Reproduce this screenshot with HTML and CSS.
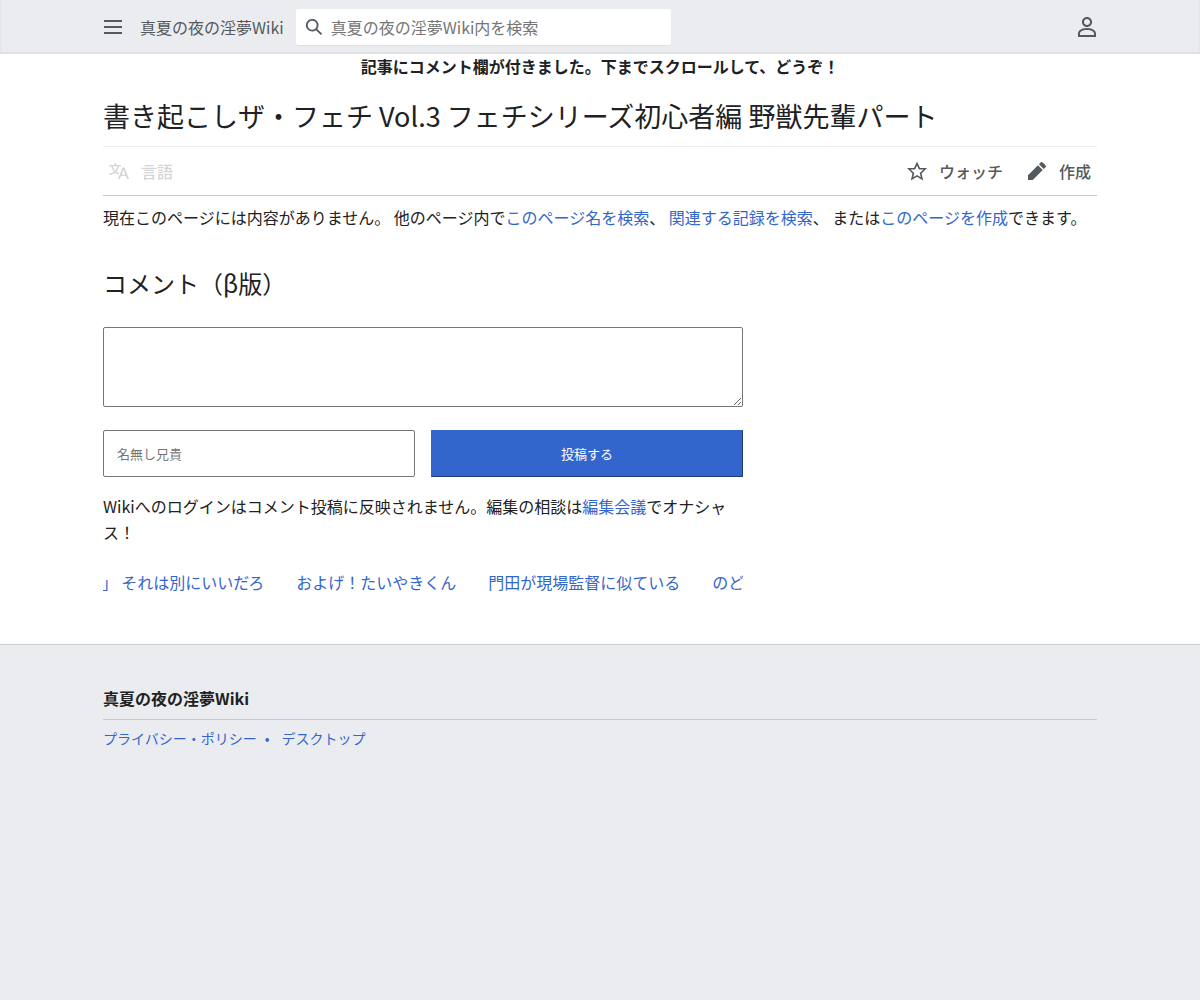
FILE: index.html
```
<!DOCTYPE html>
<html lang="ja">
<head>
<meta charset="UTF-8">
<meta name="viewport" content="width=device-width, initial-scale=1">
<title>書き起こしザ・フェチ Vol.3 フェチシリーズ初心者編 野獣先輩パート</title>
<link rel="stylesheet" href="styles.css">
</head>
<body>

<header class="header-container">
  <div class="header inner">
    <button class="icon-button" type="button" aria-label="メニュー">
      <svg class="icon" viewBox="0 0 20 20"><path d="M1 3h18v2H1zm0 6h18v2H1zm0 6h18v2H1z"/></svg>
    </button>
    <a class="branding" href="#">真夏の夜の淫夢Wiki</a>
    <form class="search-box">
      <svg class="icon search-icon" viewBox="0 0 20 20"><path d="M12.2 13.6a7 7 0 1 1 1.4-1.4l5.4 5.4-1.4 1.4zM13 8A5 5 0 1 0 3 8a5 5 0 0 0 10 0"/></svg>
      <input class="search" type="search" aria-label="検索" placeholder="真夏の夜の淫夢Wiki内を検索">
    </form>
    <button class="icon-button user-menu" type="button" aria-label="利用者メニュー">
      <svg class="icon" viewBox="0 0 20 20"><path d="M10 8c1.7 0 3.06-1.35 3.06-3S11.7 2 10 2 6.94 3.35 6.94 5 8.3 8 10 8m0 2c-2.8 0-5.06-2.24-5.06-5S7.2 0 10 0s5.06 2.24 5.06 5-2.26 5-5.06 5m-7 8h14v-1.33c0-1.75-2.31-3.56-7-3.56s-7 1.81-7 3.56zm7-6.89c6.66 0 9 3.33 9 5.56V20H1v-3.33c0-2.23 2.34-5.56 9-5.56"/></svg>
    </button>
  </div>
</header>

<main class="inner">
  <div class="site-notice">記事にコメント欄が付きました。下までスクロールして、どうぞ！</div>

  <h1>書き起こしザ・フェチ Vol.3 フェチシリーズ初心者編 野獣先輩パート</h1>

  <nav class="page-actions">
    <button class="action language" type="button" disabled>
      <svg class="icon" viewBox="0 0 20 20"><path d="M20 18h-1.44a.6.6 0 0 1-.4-.12.8.8 0 0 1-.23-.31L17 15h-5l-1 2.54a.8.8 0 0 1-.22.3.6.6 0 0 1-.4.14H9l4.55-11.47h1.89zm-3.53-4.31L14.89 9.5a12 12 0 0 1-.39-1.24q-.09.37-.19.69l-.19.56-1.58 4.19zm-6.3-1.58a13.4 13.4 0 0 1-2.91-1.41 11.46 11.46 0 0 0 2.81-5.37H12V4H7.31a4 4 0 0 0-.2-.56C6.87 2.79 6.6 2 6.6 2l-1.47.5s.4.89.6 1.5H0v1.33h2.15A11.23 11.23 0 0 0 5 10.7a17.2 17.2 0 0 1-5 2.1q.56.82.87 1.38a23.3 23.3 0 0 0 5.22-2.51 15.6 15.6 0 0 0 3.56 1.77zM3.63 5.33h4.91a8.1 8.1 0 0 1-2.45 4.45 9.1 9.1 0 0 1-2.46-4.45"/></svg>
      <span>言語</span>
    </button>
    <a class="action watch" href="#">
      <svg class="icon" viewBox="0 0 20 20"><path d="M20 7h-7L10 .5 7 7H0l5.46 5.47-1.64 7 6.18-3.7 6.18 3.73-1.63-7zm-10 6.9-3.76 2.27 1-4.28L3.5 8.5h4.61L10 4.6l1.9 3.9h4.6l-3.73 3.4 1 4.28z"/></svg>
      <span>ウォッチ</span>
    </a>
    <a class="action" href="#">
      <svg class="icon" viewBox="0 0 20 20"><path d="m16.77 8 1.94-2a1 1 0 0 0 0-1.41l-3.34-3.3a1 1 0 0 0-1.41 0L12 3.23zM1 14.25V19h4.75l9.96-9.96-4.75-4.75z"/></svg>
      <span>作成</span>
    </a>
  </nav>

  <p class="no-article">現在このページには内容がありません。 他のページ内で<a href="#">このページ名を検索</a>、 <a href="#">関連する記録を検索</a>、 または<a href="#">このページを作成</a>できます。</p>

  <section class="comments">
    <h2>コメント（β版）</h2>
    <form class="comment-form">
      <textarea class="comment-text" aria-label="コメント"></textarea>
      <div class="comment-row">
        <input class="comment-name" type="text" aria-label="名前" placeholder="名無し兄貴">
        <button class="comment-submit" type="button">投稿する</button>
      </div>
    </form>
    <p class="comment-note">Wikiへのログインはコメント投稿に反映されません。編集の相談は<a href="#">編集会議</a>でオナシャス！</p>
    <div class="ticker">
      <a href="#">」 それは別にいいだろ</a>
      <a href="#">およげ！たいやきくん</a>
      <a href="#">門田が現場監督に似ている</a>
      <a href="#">のど</a>
    </div>
  </section>
</main>

<footer class="footer">
  <div class="inner">
    <h2 class="footer-title">真夏の夜の淫夢Wiki</h2>
    <ul class="footer-places">
      <li><a href="#">プライバシー・ポリシー</a></li>
      <li><a href="#">デスクトップ</a></li>
    </ul>
  </div>
</footer>

</body>
</html>
```
FILE: styles.css
```
* {
  box-sizing: border-box;
}

body {
  margin: 0;
  min-height: 100vh;
  display: flex;
  flex-direction: column;
  background: #fff;
  color: #202122;
  font-family: "Noto Sans CJK JP", sans-serif;
  font-size: 16px;
  line-height: 26px;
}

a {
  color: #36c;
  text-decoration: none;
}

a:hover {
  text-decoration: underline;
}

button,
input,
textarea {
  font-family: inherit;
}

.inner {
  width: 100%;
  max-width: 994px;
  margin: 0 auto;
}

.icon {
  display: block;
  flex: none;
  width: 20px;
  height: 20px;
  fill: currentColor;
}

/* header */
.header-container {
  background: #eaecf0;
  box-shadow: inset 0 -1px 3px rgba(0, 0, 0, 0.08);
}

.header {
  display: flex;
  align-items: center;
  height: 54px;
}

.icon-button {
  padding: 0;
  border: 0;
  background: none;
  color: #54595d;
  cursor: pointer;
}

.branding {
  margin: 0 12px 0 17px;
  color: #54595d;
}

.search-box {
  display: flex;
  align-items: center;
  flex: 0 1 375px;
  height: 36px;
  padding-left: 9px;
  background: #fff;
  border-radius: 2px;
  box-shadow: 0 1px 1px rgba(0, 0, 0, 0.05);
}

.search-icon {
  width: 18px;
  height: 18px;
  color: #54595d;
}

.search {
  flex: 1;
  min-width: 0;
  padding: 0 8px;
  border: 0;
  outline: 0;
  background: none;
  font-size: 16px;
}

.search::placeholder,
.comment-name::placeholder {
  color: #757575;
}

.user-menu {
  margin-left: auto;
}

/* article */
.site-notice {
  text-align: center;
  font-weight: bold;
  line-height: 24px;
}

h1 {
  margin: 20px 0 12px;
  font-size: 27px;
  font-weight: normal;
  line-height: 36px;
}

.page-actions {
  display: flex;
  align-items: center;
  height: 50px;
  padding: 0 6px;
  border-top: 1px solid #eaecf0;
  border-bottom: 1px solid #c8ccd1;
}

.action {
  display: flex;
  align-items: center;
  gap: 12px;
  color: #54595d;
  font-size: 16px;
  font-weight: 500;
}

.language {
  margin-right: auto;
  padding: 0;
  border: 0;
  background: none;
  opacity: 0.25;
}

.watch {
  margin-right: 24px;
}

.no-article {
  margin: 8px 0 0;
}

/* comments */
.comments {
  max-width: 640px;
  padding-bottom: 49px;
}

.comments h2 {
  margin: 36px 0 27px;
  font-size: 24px;
  font-weight: normal;
  line-height: 34px;
}

.comment-text {
  display: block;
  width: 100%;
  height: 80px;
  border: 1px solid #767676;
  border-radius: 2px;
}

.comment-row {
  display: flex;
  gap: 16px;
  margin-top: 23px;
}

.comment-name,
.comment-submit {
  flex: 1;
  min-width: 0;
  height: 47px;
  padding: 0 13px;
  font-size: 13px;
}

.comment-name {
  border: 1px solid #767676;
  border-radius: 2px;
}

.comment-submit {
  border: 1px outset #36c;
  background: #36c;
  color: #fff;
  cursor: pointer;
}

.comment-note {
  margin: 16px 0 24px;
}

.ticker {
  display: flex;
  justify-content: center;
  gap: 32px;
  overflow: hidden;
  white-space: nowrap;
}

/* footer */
.footer {
  flex: 1;
  padding-top: 40px;
  border-top: 1px solid #c8ccd1;
  background: #eaecf0;
}

.footer-title {
  margin: 0;
  padding-bottom: 8px;
  border-bottom: 1px solid #c8ccd1;
  font-size: 16px;
}

.footer-places {
  display: flex;
  margin: 7px 0;
  padding: 0;
  list-style: none;
  font-size: 14px;
  line-height: 22px;
}

.footer-places li + li::before {
  content: "•";
  margin: 0 12px 0 8px;
  color: #36c;
}
```
